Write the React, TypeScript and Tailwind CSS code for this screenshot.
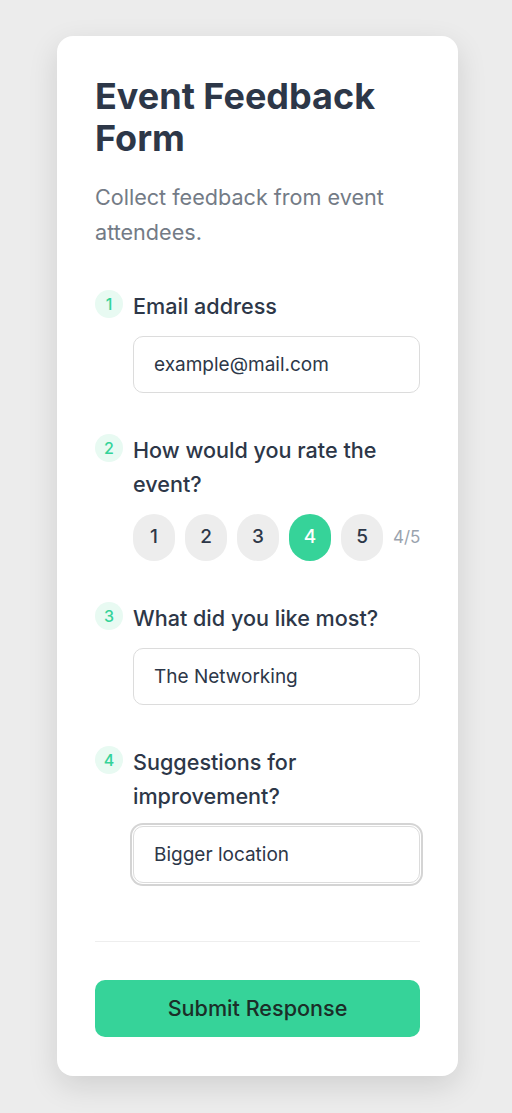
import { useState } from "react";

const font = { fontFamily: "Inter, 'Noto Sans', sans-serif" };

function Badge({ n }: { n: number }) {
  return (
    <div className="mt-[1px] flex h-7 w-7 shrink-0 items-center justify-center rounded-full bg-[#e8faf2] text-[16px] font-medium text-[#34d399]">
      {n}
    </div>
  );
}

function Question({ n, label, children }: { n: number; label: string; children: React.ReactNode }) {
  return (
    <div className="flex gap-[10px]">
      <Badge n={n} />
      <div className="flex-1">
        <div className="text-[21.6px] font-medium leading-[34px] text-[#2d3748]">{label}</div>
        <div className="mt-[13px]">{children}</div>
      </div>
    </div>
  );
}

function TextBox({ value, focused }: { value: string; focused?: boolean }) {
  return (
    <input
      defaultValue={value}
      className={`h-[57px] w-full rounded-[10px] border border-[#dcdcdc] bg-white px-5 text-[19px] text-[#2d3748] outline-none ${
        focused ? "shadow-[0_0_0_1px_#ffffff,0_0_0_3px_#d4d4d4]" : ""
      }`}
    />
  );
}

export default function App() {
  const [rating, setRating] = useState(4);

  return (
    <div className="min-h-screen bg-[#ececec] pt-9 pr-[54px] pb-9 pl-[57px]" style={font}>
      {/* CARD */}
      <div className="rounded-2xl bg-white px-[38px] pt-[39px] pb-[39px] shadow-[0_10px_30px_rgba(0,0,0,0.12)]">
        <h1 className="text-[36px] font-bold leading-[42px] text-[#2d3748]">Event Feedback Form</h1>
        <p className="mt-[21px] text-[21.6px] leading-[35px] text-[#737b86]">Collect feedback from event attendees.</p>

        <div className="mt-[39px] space-y-[40px]">
          <Question n={1} label="Email address">
            <TextBox value="example@mail.com" />
          </Question>

          <Question n={2} label="How would you rate the event?">
            <div className="flex items-center gap-[10px]">
              {[1, 2, 3, 4, 5].map((v) => (
                <button
                  key={v}
                  onClick={() => setRating(v)}
                  className={`h-[47px] w-[42px] rounded-full text-[19px] font-medium ${
                    rating === v ? "bg-[#36d399] text-white" : "bg-[#ededed] text-[#2d3748]"
                  }`}
                >
                  {v}
                </button>
              ))}
              <span className="text-[17px] text-[#9aa3ae]">{rating}/5</span>
            </div>
          </Question>

          <Question n={3} label="What did you like most?">
            <TextBox value="The Networking" />
          </Question>

          <Question n={4} label="Suggestions for improvement?">
            <TextBox value="Bigger location" focused />
          </Question>
        </div>

        <div className="mt-[58px] border-t border-[#eeeeee]" />

        <button className="mt-[38px] h-[57px] w-full rounded-[10px] bg-[#36d399] text-[21.6px] font-medium text-[#1b2e28]">
          Submit Response
        </button>
      </div>
    </div>
  );
}
